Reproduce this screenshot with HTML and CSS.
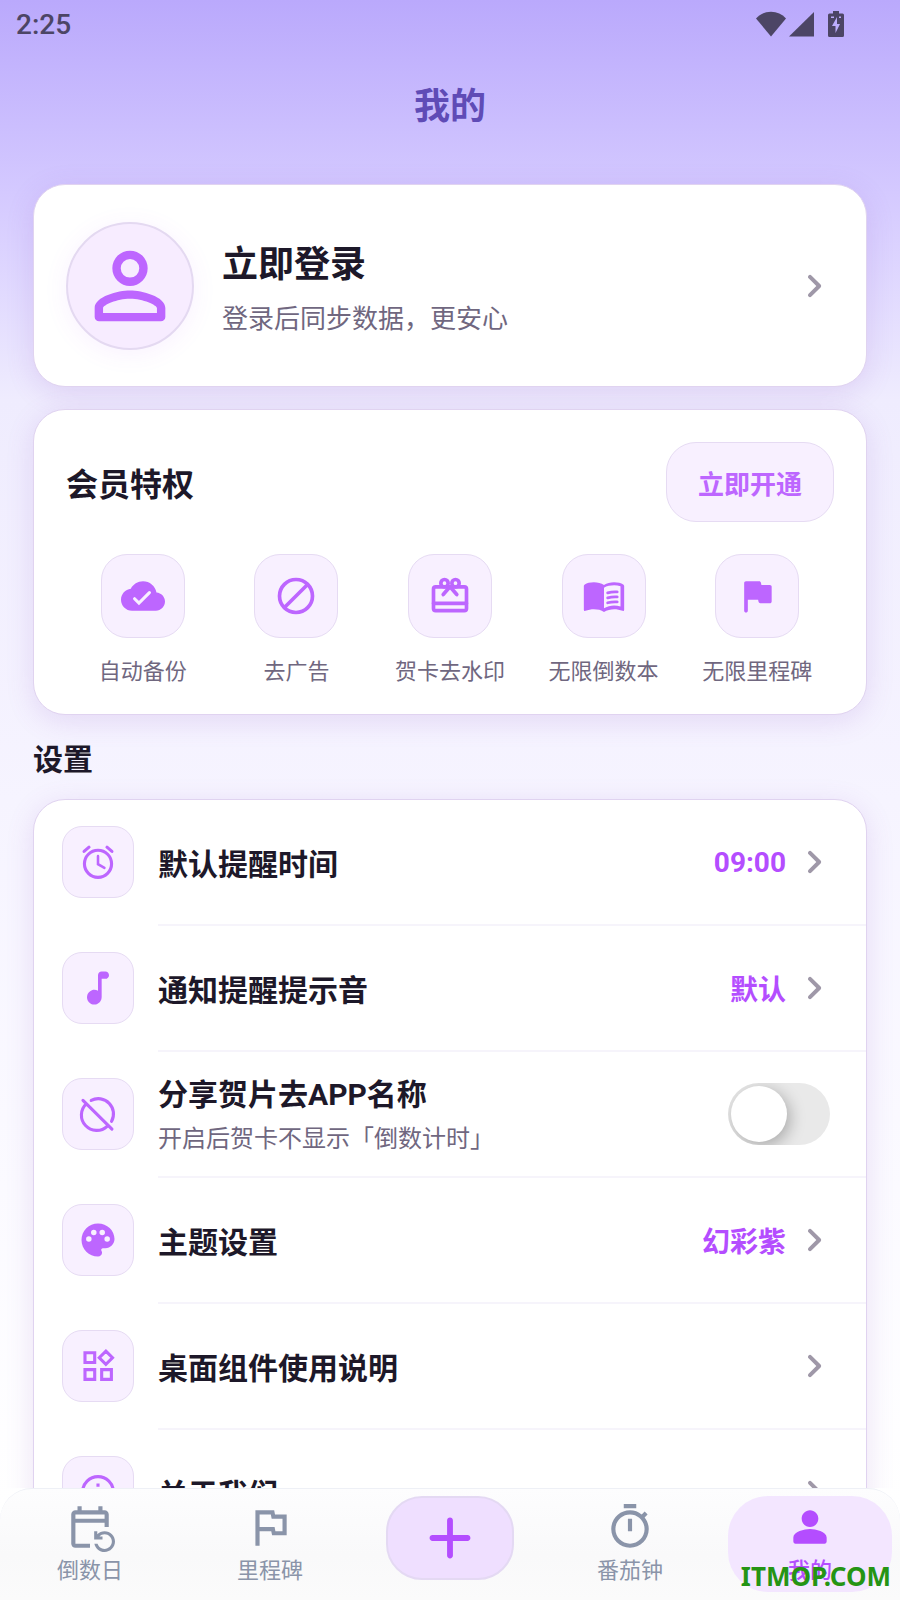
FILE: index.html
```html
<!DOCTYPE html>
<html lang="zh-CN">
<head>
    <meta charset="UTF-8">
    <meta name="viewport" content="width=device-width, initial-scale=1.0">
    <title>我的</title>
    <link rel="stylesheet" href="styles.css">
</head>
<body>

<!-- shared icons -->
<svg class="sprite" aria-hidden="true">
    <symbol id="chevron" viewBox="2 2 20 20">
        <path d="M9.29 6.71c-.39.39-.39 1.02 0 1.41L13.17 12l-3.88 3.88c-.39.39-.39 1.02 0 1.41.39.39 1.02.39 1.41 0l4.59-4.59c.39-.39.39-1.02 0-1.41L10.7 6.7c-.38-.38-1.02-.38-1.41.01z"/>
    </symbol>
</svg>

<header>
    <div class="status-bar">
        <span>2:25</span>
        <div class="status-icons">
            <svg width="30" height="26" viewBox="0 0 30 26"><path d="M15 25.500L0 7.500C4 3 9 .8 15 .8s11 2.200 15 6.700z"/></svg>
            <svg width="26" height="26" viewBox="0 0 26 26"><path d="M0 25.500L25 1v24.500z"/></svg>
            <svg class="battery" width="16" height="26" viewBox="0 0 16 26"><path fill-rule="evenodd" d="M5 0h6v2.500h3.500Q16 2.500 16 4v20.500q0 1.500-1.500 1.500h-13Q0 26 0 24.500V4q0-1.500 1.500-1.500H5zM9 6l-5 9h3.500v7L12 13H9zM3 5.500v1.500h3V5.500zM11 5.500v1.500h2V5.500z"/></svg>
        </div>
    </div>
    <h1>我的</h1>
</header>

<main>
    <button class="card profile">
        <span class="avatar">
            <svg width="106" height="106" viewBox="0 0 24 24"><path fill-rule="evenodd" d="M12 4a4 4 0 1 0 0 8 4 4 0 0 0 0-8zm0 1.900a2.100 2.100 0 1 1 0 4.200 2.100 2.100 0 0 1 0-4.200zM12 13c-2.670 0-8 1.340-8 4v2c0 .55.45 1 1 1h14c.55 0 1-.45 1-1v-2c0-2.660-5.330-4-8-4zm0 1.900c2.970 0 6.100 1.460 6.100 2.100v1.100H5.900V17c0-.64 3.130-2.100 6.100-2.100z"/></svg>
        </span>
        <span class="profile-text">
            <span class="profile-name">立即登录</span>
            <span class="profile-tip">登录后同步数据，更安心</span>
        </span>
        <svg class="chevron"><use href="#chevron"/></svg>
    </button>

    <section class="card member">
        <div class="member-head">
            <h2>会员特权</h2>
            <button class="open-btn">立即开通</button>
        </div>
        <ul class="perks">
            <li>
                <span class="tile big">
                    <svg viewBox="0 0 24 24"><path d="M19.350 10.040C18.670 6.590 15.640 4 12 4 9.110 4 6.600 5.640 5.350 8.040 2.340 8.360 0 10.910 0 14c0 3.310 2.690 6 6 6h13c2.760 0 5-2.240 5-5 0-2.640-2.050-4.780-4.650-4.960z"/><path class="cut" d="M7.400 13.500l2.400 2.400 5.700-5.700"/></svg>
                </span>
                自动备份
            </li>
            <li>
                <span class="tile big">
                    <svg class="line thick" viewBox="0 0 24 24"><circle cx="12" cy="12" r="9"/><path d="M5.700 18.300L18.300 5.700"/></svg>
                </span>
                去广告
            </li>
            <li>
                <span class="tile big">
                    <svg class="line thick" viewBox="0 0 24 24"><rect x="3" y="7" width="18" height="13" rx="1.200"/><circle cx="9" cy="5" r="2"/><circle cx="15" cy="5" r="2"/><path d="M3 16h18M11.500 7.500L8.300 11.200M12.500 7.500l3.200 3.700"/></svg>
                </span>
                贺卡去水印
            </li>
            <li>
                <span class="tile big">
                    <svg viewBox="0 0 24 24"><path fill-rule="evenodd" d="M12 6C10.500 5 8.500 4.500 6.500 4.500S2.600 4.900 1.500 5.700Q1 6 1 6.600V19.500q0 .9.900.6C3.300 19.500 5 19.200 6.500 19.200c2 0 4 .4 5.500 1.500 1.500-1 3.800-1.500 5.500-1.500 1.500 0 3.200.3 4.600.9.500.2.900-.1.900-.6V6.600q0-.6-.5-.9C21.400 4.900 19.500 4.500 17.500 4.500S13.500 5 12 6zM21 17.700c-1.100-.35-2.300-.5-3.500-.5-1.700 0-4.150.65-5.500 1.500V7.500C13.350 6.650 15.800 6.200 17.500 6.200c1.200 0 2.400.15 3.500.5z"/><path class="thin" d="M14 10.300q2.500-.7 5.200-.5M14 13q2.500-.7 5.200-.5M14 15.700q2.500-.7 5.200-.5"/></svg>
                </span>
                无限倒数本
            </li>
            <li>
                <span class="tile big">
                    <svg viewBox="0 0 24 24"><path d="M14.400 6l-.24-1.200c-.09-.46-.5-.8-.98-.8H6c-.55 0-1 .45-1 1v15c0 .55.45 1 1 1s1-.45 1-1v-6h5.600l.24 1.200c.09.47.5.8.98.8H19c.55 0 1-.45 1-1V7c0-.55-.45-1-1-1h-4.600z"/></svg>
                </span>
                无限里程碑
            </li>
        </ul>
    </section>

    <h2 class="section-title">设置</h2>

    <ul class="card settings">
        <li class="row">
            <span class="tile"><svg class="line" viewBox="0 0 24 24"><circle cx="12" cy="13" r="7.400"/><path d="M4.400 6.200l2.700-2.300M19.600 6.200l-2.700-2.300"/><path stroke-width="1.400" d="M12 8.800v4.400l3.500 2"/></svg></span>
            <button class="row-body">
                <span class="label">默认提醒时间</span>
                <span class="value">09:00</span>
                <svg class="chevron"><use href="#chevron"/></svg>
            </button>
        </li>
        <li class="row">
            <span class="tile"><svg viewBox="0 0 24 24"><path d="M12 5v8.550c-.94-.54-2.100-.75-3.330-.32-1.340.48-2.370 1.670-2.610 3.070-.46 2.740 1.860 5.080 4.590 4.650 1.960-.31 3.350-2.110 3.350-4.100V7h2c1.100 0 2-.9 2-2s-.9-2-2-2h-2c-1.100 0-2 .9-2 2z"/></svg></span>
            <button class="row-body">
                <span class="label">通知提醒提示音</span>
                <span class="value">默认</span>
                <svg class="chevron"><use href="#chevron"/></svg>
            </button>
        </li>
        <li class="row">
            <span class="tile"><svg class="line" viewBox="0 0 24 24"><path d="M8.300 4.600A8.300 8.300 0 0 1 19.400 16M17 18.700A8.300 8.300 0 0 1 5.600 6.500M3.800 4.600L19.600 20.300"/></svg></span>
            <label class="row-body" for="hideName">
                <span class="label">分享贺片去APP名称<small>开启后贺卡不显示「倒数计时」</small></span>
                <input type="checkbox" id="hideName" class="switch">
            </label>
        </li>
        <li class="row">
            <span class="tile"><svg viewBox="0 0 24 24"><path fill-rule="evenodd" d="M12 3c-4.970 0-9 4.030-9 9s4.030 9 9 9c1.300 0 2.200-.9 2.200-2 0-.6-.2-.9-.4-1.300-.2-.6.2-1.200.9-1.200H16c2.760 0 5-2.240 5-5 0-4.700-4.030-8.500-9-8.500zM7 10a1.500 1.500 0 1 1 0 3 1.500 1.500 0 0 1 0-3zm2.700-3.600a1.500 1.500 0 1 1 0 3 1.500 1.500 0 0 1 0-3zm4.600 0a1.500 1.500 0 1 1 0 3 1.500 1.500 0 0 1 0-3zM17 10a1.500 1.500 0 1 1 0 3 1.500 1.500 0 0 1 0-3z"/></svg></span>
            <button class="row-body">
                <span class="label">主题设置</span>
                <span class="value">幻彩紫</span>
                <svg class="chevron"><use href="#chevron"/></svg>
            </button>
        </li>
        <li class="row">
            <span class="tile"><svg class="line square" viewBox="0 0 24 24"><path d="M4.900 4.800h5.300v5.300H4.900zM4.900 14h5.300v5.300H4.900zM14 14h5.300v5.300H14zM16.300 3.900l3.600 3.600-3.600 3.600-3.600-3.600z"/></svg></span>
            <button class="row-body">
                <span class="label">桌面组件使用说明</span>
                <svg class="chevron"><use href="#chevron"/></svg>
            </button>
        </li>
        <li class="row">
            <span class="tile"><svg class="line square" viewBox="0 0 24 24"><circle cx="12" cy="12" r="8.400"/><path d="M12 7.400v1.800M12 11v6"/></svg></span>
            <button class="row-body">
                <span class="label">关于我们</span>
                <svg class="chevron"><use href="#chevron"/></svg>
            </button>
        </li>
    </ul>
</main>

<nav>
    <a href="#days">
        <svg viewBox="0 0 24 24"><path fill-rule="evenodd" d="M21 12V6c0-1.100-.9-2-2-2h-1V2h-2v2H8V2H6v2H5c-1.100 0-2 .9-2 2v14c0 1.100.9 2 2 2h7v-2H5V10h14v2h2zM5 6h14v2H5z"/><path d="M15.640 20c.43 1.450 1.770 2.500 3.360 2.500 1.930 0 3.500-1.570 3.500-3.500s-1.570-3.500-3.500-3.500c-.95 0-1.820.38-2.450 1H18V18h-4v-4h1.500v1.430c.9-.88 2.140-1.430 3.500-1.430 2.760 0 5 2.240 5 5s-2.240 5-5 5c-2.420 0-4.440-1.720-4.900-4h1.540z"/></svg>
        倒数日
    </a>
    <a href="#milestones">
        <svg viewBox="0 0 24 24"><path fill-rule="evenodd" d="M14.400 6L14 4H5v17h2v-7h5.600l.4 2h7V6zM18 14h-3.400l-.4-2H7V6h5.400l.4 2H18z"/></svg>
        里程碑
    </a>
    <button class="add-btn" aria-label="添加">
        <svg viewBox="0 0 24 24"><path d="M18 13h-5v5c0 .55-.45 1-1 1s-1-.45-1-1v-5H6c-.55 0-1-.45-1-1s.45-1 1-1h5V6c0-.55.45-1 1-1s1 .45 1 1v5h5c.55 0 1 .45 1 1s-.45 1-1 1z"/></svg>
    </button>
    <a href="#pomodoro">
        <svg viewBox="0 0 24 24"><path d="M15 1H9v2h6V1zm-4 13h2V8h-2v6zm8.030-6.610l1.420-1.420c-.43-.51-.9-.99-1.410-1.410l-1.420 1.420C16.070 4.740 14.120 4 12 4c-4.970 0-9 4.030-9 9s4.020 9 9 9 9-4.030 9-9c0-2.120-.74-4.070-1.970-5.610zM12 20c-3.870 0-7-3.130-7-7s3.130-7 7-7 7 3.130 7 7-3.130 7-7 7z"/></svg>
        番茄钟
    </a>
    <a href="#mine" class="active" aria-current="page">
        <svg viewBox="0 0 24 24"><path d="M12 12c2.210 0 4-1.790 4-4s-1.790-4-4-4-4 1.790-4 4 1.790 4 4 4zm0 1c-2.670 0-8 1.340-8 4v2c0 .55.45 1 1 1h14c.55 0 1-.45 1-1v-2c0-2.660-5.330-4-8-4z"/></svg>
        我的
    </a>
    <span class="watermark">ITMOP.COM</span>
</nav>

</body>
</html>
```

FILE: styles.css
```css
* {
    box-sizing: border-box;
}

body {
    margin: 0;
    height: 100vh;
    display: flex;
    flex-direction: column;
    overflow: hidden;
    font-family: Roboto, "Noto Sans CJK SC", sans-serif;
    color: #1d1829;
    background: linear-gradient(#baa9fc 0%, #d4c9ff 12%, #efecfe 25%, #f6f4ff 50%, #ffffff 94%);
}

h1, h2, ul {
    margin: 0;
    padding: 0;
}

ul {
    list-style: none;
}

button {
    margin: 0;
    padding: 0;
    border: none;
    background: none;
    font: inherit;
    color: inherit;
    text-align: left;
    cursor: pointer;
}

svg {
    flex: none;
    fill: currentColor;
}

.sprite {
    position: absolute;
    width: 0;
    height: 0;
}

/* Header */
.status-bar {
    display: flex;
    justify-content: space-between;
    align-items: center;
    height: 48px;
    padding: 0 56px 0 16px;
    font-size: 28px;
    font-weight: 500;
    color: #4c4565;
}

.status-icons {
    display: flex;
    gap: 3px;
}

.battery {
    margin-left: 10px;
}

h1 {
    padding-top: 6px;
    line-height: 106px;
    font-size: 36px;
    font-weight: 700;
    text-align: center;
    color: #5f4bb6;
}

/* Cards */
main {
    flex: 1;
    min-height: 0;
    padding: 24px 33px 0;
    overflow-y: auto;
    scrollbar-width: none;
}

.card {
    width: 100%;
    background: #fff;
    border: 1px solid #e0d3f0;
    border-radius: 32px;
    box-shadow: 0 6px 28px rgba(140, 80, 190, 0.16);
}

.profile {
    display: flex;
    align-items: center;
    margin-bottom: 22px;
    padding: 37px 32px 36px;
}

.avatar {
    display: flex;
    align-items: center;
    justify-content: center;
    width: 128px;
    height: 128px;
    margin-right: 28px;
    border: 2px solid #e4d9f1;
    border-radius: 50%;
    background: #f7ecff;
    color: #bd66ff;
    box-shadow: 0 4px 24px rgba(180, 77, 255, 0.08);
}

.profile-text {
    display: flex;
    flex: 1;
    flex-direction: column;
    padding-top: 6px;
}

.profile-name {
    font-size: 36px;
    font-weight: 700;
    line-height: 60px;
}

.profile-tip {
    font-size: 26px;
    line-height: 48px;
    color: #70677f;
}

.chevron {
    width: 40px;
    height: 40px;
    color: #9f98a8;
}

.member {
    padding: 32px 32px 26px;
}

.member-head {
    display: flex;
    align-items: center;
    justify-content: space-between;
    margin-bottom: 32px;
}

.member-head h2 {
    font-size: 32px;
}

.open-btn {
    height: 80px;
    padding: 0 31px;
    border: 1px solid #e6dbf3;
    border-radius: 30px;
    background: #f8f0ff;
    font-size: 26px;
    font-weight: 700;
    color: #bd66ff;
}

.perks {
    display: grid;
    grid-template-columns: repeat(5, 1fr);
}

.perks li {
    display: flex;
    flex-direction: column;
    align-items: center;
    gap: 18px;
    font-size: 22px;
    line-height: 32px;
    color: #70677f;
}

.tile {
    display: flex;
    flex: none;
    align-items: center;
    justify-content: center;
    width: 72px;
    height: 72px;
    border: 1px solid #e6dbf3;
    border-radius: 20px;
    background: #f8f0ff;
    color: #bd66ff;
}

.tile.big {
    width: 84px;
    height: 84px;
    border-radius: 26px;
}

.tile svg {
    width: 44px;
    height: 44px;
}

.line {
    fill: none;
    stroke: currentColor;
    stroke-width: 1.7;
    stroke-linecap: round;
}

.thick {
    stroke-width: 2;
}

.square {
    stroke-linecap: butt;
}

.cut, .thin {
    fill: none;
    stroke: #f8f0ff;
    stroke-width: 1.7;
    stroke-linecap: round;
}

.thin {
    stroke: currentColor;
    stroke-width: 1.5;
}

/* Settings */
.section-title {
    padding-top: 6px;
    font-size: 30px;
    line-height: 78px;
}

.row {
    display: flex;
    align-items: center;
    gap: 24px;
    padding-left: 28px;
}

.row .tile {
    margin-bottom: 2px;
}

.row-body {
    display: flex;
    flex: 1;
    align-items: center;
    height: 126px;
    padding-right: 32px;
    border-bottom: 2px solid #f6f4fb;
    cursor: pointer;
}

.label {
    flex: 1;
    padding-top: 6px;
    font-size: 30px;
    font-weight: 700;
    line-height: 44px;
}

.label small {
    display: block;
    font-size: 24px;
    font-weight: 400;
    color: #70677f;
}

.value {
    margin-right: 8px;
    font-size: 28px;
    font-weight: 700;
    color: #b44dff;
}

.switch {
    appearance: none;
    width: 102px;
    height: 62px;
    margin: 0 4px 0 0;
    padding: 3px;
    border-radius: 31px;
    background: #e9e9e9;
    overflow: hidden;
    cursor: pointer;
}

.switch::before {
    content: "";
    display: block;
    width: 56px;
    height: 56px;
    border-radius: 50%;
    background: #fff;
    box-shadow: 3px 4px 16px rgba(0, 0, 0, 0.28);
}

.switch:checked {
    background: #bd66ff;
}

.switch:checked::before {
    margin-left: 40px;
}

/* Bottom navigation */
nav {
    position: relative;
    display: grid;
    grid-template-columns: repeat(5, 1fr);
    height: 112px;
    padding-top: 7px;
    border-top: 1px solid #eef0f6;
    border-radius: 32px 32px 0 0;
    background: linear-gradient(#fdfdfe, #f9f9fa 60%, #fbfbfb);
}

nav a {
    display: flex;
    flex-direction: column;
    align-items: center;
    height: 96px;
    margin: 0 8px;
    padding-top: 6px;
    border-radius: 40px;
    font-size: 22px;
    line-height: 38px;
    color: #8a94a9;
    text-decoration: none;
}

nav a svg {
    width: 50px;
    height: 50px;
}

nav .active {
    background: #f3e6ff;
    color: #b44dff;
    font-weight: 500;
}

.add-btn {
    display: flex;
    align-items: center;
    justify-content: center;
    justify-self: center;
    width: 128px;
    height: 84px;
    border: 2px solid #e4d9f3;
    border-radius: 36px;
    background: #efdfff;
    color: #b44dff;
}

.add-btn svg {
    width: 70px;
    height: 70px;
}

.watermark {
    position: absolute;
    right: 9px;
    bottom: 6px;
    font-family: "Noto Sans", sans-serif;
    font-size: 26px;
    font-weight: 700;
    color: #259414;
}
```
